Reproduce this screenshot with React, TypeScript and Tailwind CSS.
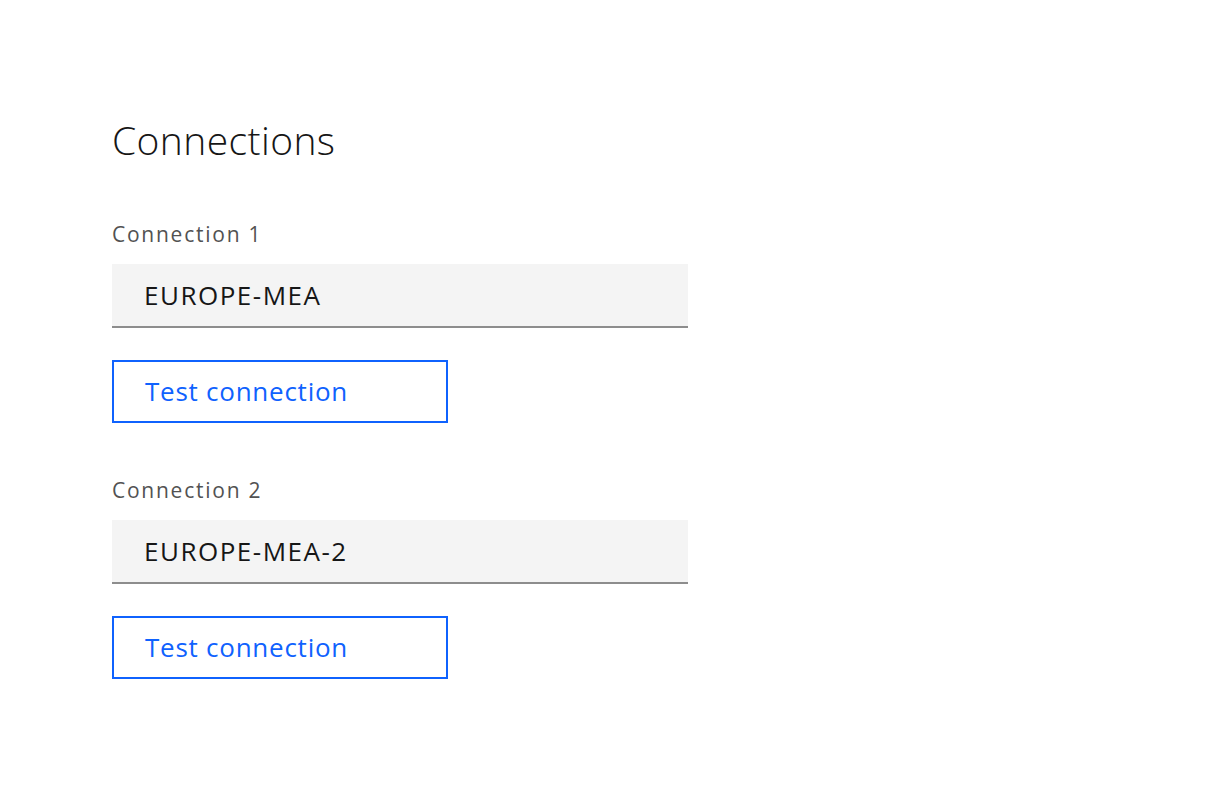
import React from 'react';

const connections = [
  { label: 'Connection 1', value: 'EUROPE-MEA' },
  { label: 'Connection 2', value: 'EUROPE-MEA-2' },
];

const ConnectionField: React.FC<{ label: string; value: string }> = ({ label, value }) => (
  <div className="flex flex-col">
    <label className="text-[21px] leading-[28px] text-[#525252] tracking-[1.75px]">{label}</label>
    <div className="mt-[16px] w-[576px] h-[64px] bg-[#f4f4f4] border-b-2 border-[#8d8d8d] flex items-center pl-[32px]">
      <span className="text-[26px] text-[#161616] tracking-[1.5px]">{value}</span>
    </div>
    <button className="mt-[32px] w-[336px] h-[63px] border-2 border-[#0f62fe] text-[#0f62fe] text-[26px] text-left pl-[31px] tracking-[0.75px]">
      Test connection
    </button>
  </div>
);

export default function App() {
  return (
    <div className="min-h-[810px] bg-white pl-[112px] pt-[116px]" style={{ fontFamily: '"Open Sans", "Noto Sans", sans-serif' }}>
      <h1 className="text-[39px] leading-[48px] text-[#161616] font-light tracking-[0.4px]">Connections</h1>
      <div className="mt-[56px] flex flex-col gap-[53px]">
        {connections.map((c) => (
          <ConnectionField key={c.label} label={c.label} value={c.value} />
        ))}
      </div>
    </div>
  );
}
